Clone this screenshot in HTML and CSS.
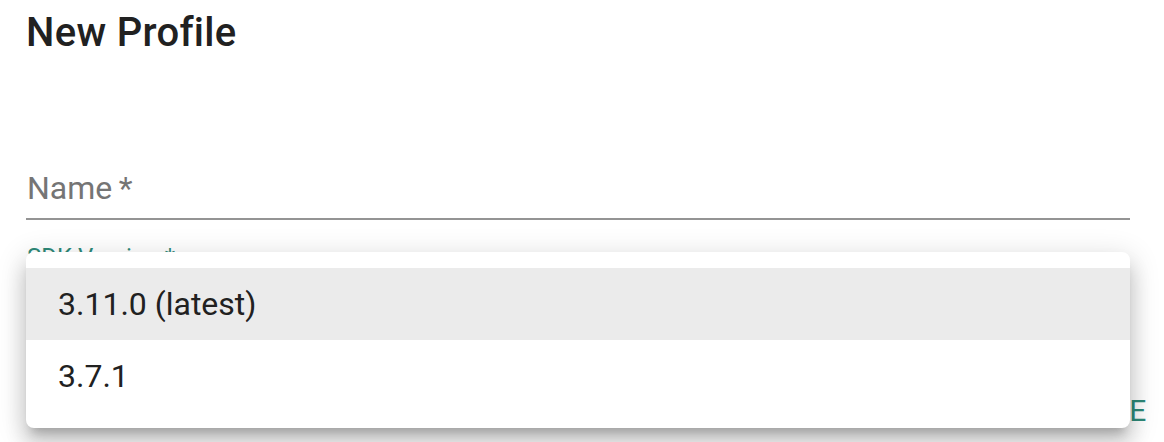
FILE: index.html
```html
<!DOCTYPE html>
<html lang="en">
<head>
<meta charset="utf-8">
<title>New Profile</title>
<link rel="stylesheet" href="styles.css">
</head>
<body>
<div class="dialog">
  <h2 class="dialog-title">New Profile</h2>
  <div class="field">
    <label class="field-label">Name<span class="req">&thinsp;*</span></label>
  </div>
  <div class="select-label">SDK Version *</div>
  <div class="select-field"></div>
  <div class="actions">
    <button class="btn">CREATE</button>
  </div>
</div>
<ul class="menu">
  <li class="menu-item selected">3.11.0 (latest)</li>
  <li class="menu-item">3.7.1</li>
</ul>
</body>
</html>
```

FILE: styles.css
```css
html, body {
  margin: 0;
  padding: 0;
  background: #ffffff;
  overflow: hidden;
}
body {
  width: 1164px;
  height: 442px;
  font-family: Roboto, "Liberation Sans", Arial, sans-serif;
  color: rgba(0, 0, 0, 0.87);
  position: relative;
}
.dialog {
  padding: 1px 0 0 26px;
  width: 1104px;
}
.dialog-title {
  margin: 0;
  font-size: 40px;
  font-weight: 500;
  line-height: 64px;
  color: #212121;
  letter-spacing: 0.3px;
}
.field {
  margin-top: 103px;
  padding-bottom: 10px;
  border-bottom: 2px solid #949494;
}
.field-label {
  display: block;
  font-size: 32px;
  line-height: 40px;
  color: #757575;
  padding-left: 1px;
}
.select-label {
  margin-top: 25px;
  font-size: 24px;
  line-height: 24px;
  color: #2e8a79;
  padding-left: 1px;
}
.select-field {
  margin-top: 4px;
  height: 46px;
  border-bottom: 2px solid #2e8a79;
}
.actions {
  margin-top: 70px;
  width: 1121px;
  display: flex;
  justify-content: flex-end;
}
.btn {
  border: 0;
  background: transparent;
  padding: 0;
  margin: 0;
  font-family: Roboto, "Liberation Sans", Arial, sans-serif;
  font-size: 30px;
  font-weight: 400;
  line-height: 40px;
  letter-spacing: 0.8px;
  color: #2e8a79;
}
.menu {
  position: absolute;
  left: 26px;
  top: 252px;
  width: 1104px;
  margin: 0;
  padding: 16px 0;
  list-style: none;
  background: #ffffff;
  border-radius: 8px;
  box-shadow: 0 10px 10px -6px rgba(0, 0, 0, 0.2),
              0 16px 20px 2px rgba(0, 0, 0, 0.14),
              0 6px 28px 4px rgba(0, 0, 0, 0.12);
}
.menu-item {
  padding: 12px 32px;
  font-size: 32px;
  line-height: 48px;
  color: #212121;
}
.menu-item.selected {
  background: #ebebeb;
}
```
